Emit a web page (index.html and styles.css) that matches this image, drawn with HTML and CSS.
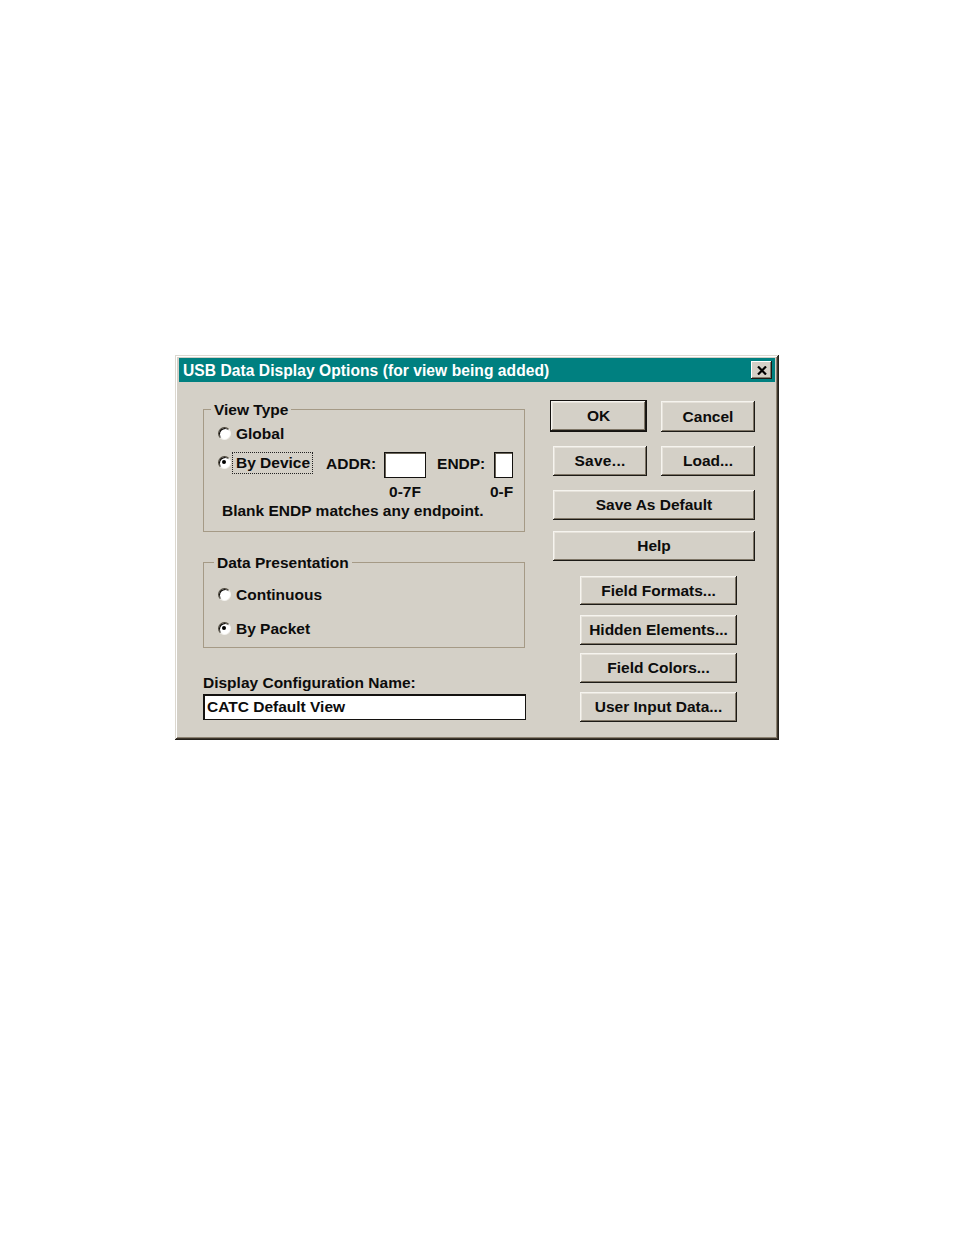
FILE: index.html
```html
<!DOCTYPE html>
<html>
<head>
<meta charset="utf-8">
<title>USB Data Display Options</title>
<link rel="stylesheet" href="styles.css">
</head>
<body>
<div class="page">
  <div class="dialog">
    <div class="titlebar">
      <span class="title">USB Data Display Options (for view being added)</span>
      <span class="close">
        <svg width="10" height="9" viewBox="0 0 10 9"><path d="M1 0.5 L9 8.5 M9 0.5 L1 8.5" stroke="#000" stroke-width="2.2"/></svg>
      </span>
    </div>
    <div class="content">
      <div class="left">
        <fieldset class="group g1">
          <legend>View Type</legend>
          <div class="inner">
            <div class="opt row1">
              <span class="radio"></span><span class="lbl">Global</span>
            </div>
            <div class="opt row2">
              <span class="radio on"></span><span class="lbl focus">By Device</span>
              <span class="fl addr">ADDR:</span><span class="box wide"></span>
              <span class="fl endp">ENDP:</span><span class="box narrow"></span>
            </div>
            <div class="ranges"><span class="r1">0-7F</span><span class="r2">0-F</span></div>
            <div class="note">Blank ENDP matches any endpoint.</div>
          </div>
        </fieldset>
        <fieldset class="group g2">
          <legend>Data Presentation</legend>
          <div class="inner">
            <div class="opt row3">
              <span class="radio"></span><span class="lbl">Continuous</span>
            </div>
            <div class="opt row4">
              <span class="radio on"></span><span class="lbl">By Packet</span>
            </div>
          </div>
        </fieldset>
        <div class="namelbl">Display Configuration Name:</div>
        <div class="namebox">CATC Default View</div>
      </div>
      <div class="right">
        <div class="brow">
          <span class="btn def ok">OK</span>
          <span class="btn cancel">Cancel</span>
        </div>
        <div class="brow r2row">
          <span class="btn save">Save...</span>
          <span class="btn load">Load...</span>
        </div>
        <span class="btn long sad">Save As Default</span>
        <span class="btn long help">Help</span>
        <span class="btn mid ff">Field Formats...</span>
        <span class="btn mid he">Hidden Elements...</span>
        <span class="btn mid fc">Field Colors...</span>
        <span class="btn mid ui">User Input Data...</span>
      </div>
    </div>
  </div>
</div>
</body>
</html>
```
FILE: styles.css
```css
html, body {
  margin: 0;
  padding: 0;
  background: #ffffff;
}
body {
  font-family: "Liberation Sans", Arial, sans-serif;
  font-weight: bold;
  font-size: 15.5px;
  line-height: 17px;
  color: #0c0c0c;
}
.page {
  padding: 355px 0 0 175px;
}
.dialog {
  width: 604px;
  height: 385px;
  box-sizing: border-box;
  background: #d4d0c7;
  padding: 3px 4px 4px 4px;
  box-shadow: inset -1px -1px 0 #24201a, inset 1px 1px 0 #dcd8d0,
              inset -2px -2px 0 #3e372d, inset 2px 2px 0 #ffffff,
              inset -3px -3px 0 #8c8272;
}
.titlebar {
  height: 24px;
  background: #008080;
  display: flex;
  align-items: center;
  justify-content: space-between;
  padding: 0 3px 0 4px;
}
.title {
  color: #ffffff;
  font-size: 15.6px;
  letter-spacing: 0.05px;
  line-height: 17px;
  padding-top: 1px;
}
.close {
  width: 21px;
  height: 18px;
  box-sizing: border-box;
  background: #d4d0c7;
  display: flex;
  align-items: center;
  justify-content: center;
  box-shadow: inset -1px -1px 0 #1c1a16, inset 1px 1px 0 #ffffff, inset -2px -2px 0 #857c6c;
}
.content {
  display: flex;
  padding: 18px 0 0 24px;
}
.left {
  width: 323px;
  display: flex;
  flex-direction: column;
}
.group {
  margin: 0;
  padding: 0;
  width: 322px;
  box-sizing: border-box;
  border: 1px solid #a59a86;
  min-width: 0;
}
.group legend {
  padding: 0 3px;
  margin-left: 7px;
  line-height: 17px;
}
.inner {
  padding-left: 14px;
}
.g1 {
  margin-top: 1px;
  padding: 7px 0 11px 0;
  height: 131px;
}
.g2 {
  margin-top: 22px;
  padding: 15px 0 10px 0;
}
.g2 legend {
  margin-left: 10px;
}
.opt {
  display: flex;
  align-items: center;
}
.row1 { height: 17px; }
.row2 { height: 26px; margin-top: 10px; }
.row3 { height: 17px; }
.row4 { height: 17px; margin-top: 17px; }
.radio {
  width: 13px;
  height: 13px;
  box-sizing: border-box;
  border-radius: 50%;
  background: #ffffff;
  border: 1px solid;
  border-color: #4a4438 #f4f2ee #f4f2ee #4a4438;
  box-shadow: inset 1px 1px 0 #0c0a08;
  position: relative;
  flex: none;
  margin-right: 5px;
}
.radio.on::after {
  content: "";
  position: absolute;
  left: 3px;
  top: 3px;
  width: 4px;
  height: 4px;
  border-radius: 50%;
  background: #000;
}
.row2 .radio { margin-right: 2px; margin-bottom: 5px; }
.row2 .focus, .row2 .fl { margin-bottom: 4px; }
.focus {
  outline: 1px dotted #222;
  padding: 1px 2px 2px 3px;
}
.fl.addr { margin-left: 14px; }
.fl.endp { margin-left: 11px; }
.box {
  height: 26px;
  box-sizing: border-box;
  background: #fff;
  border: 1px solid #141210;
  box-shadow: inset 1px 1px 0 #6a6458;
  margin-left: 8px;
}
.box.wide { width: 42px; }
.box.narrow { width: 19px; margin-left: 9px; }
.ranges {
  display: flex;
  margin-top: 5px;
  height: 17px;
}
.r1 {
  margin-left: 166px;
  width: 42px;
  text-align: center;
}
.r2 {
  margin-left: 64px;
}
.note {
  margin-top: 2px;
  padding-left: 4px;
  height: 17px;
}
.namelbl {
  margin-top: 26px;
  height: 17px;
}
.namebox {
  margin-top: 3px;
  width: 323px;
  height: 26px;
  box-sizing: border-box;
  background: #fff;
  border: 1px solid #141210;
  border-top-width: 2px;
  border-left-width: 2px;
  padding: 2px 0 0 2px;
}
.right {
  margin-left: 24px;
  display: flex;
  flex-direction: column;
  align-items: flex-start;
}
.brow {
  display: flex;
  align-items: flex-start;
}
.btn {
  display: flex;
  align-items: center;
  justify-content: center;
  box-sizing: border-box;
  height: 30px;
  background: #d4d0c7;
  box-shadow: inset -1px -1px 0 #1c1a16, inset 1px 1px 0 #f6f4ef,
              inset -2px -2px 0 #7e7566, inset 2px 2px 0 #e6e2da;
  padding-bottom: 1px;
}
.btn.def {
  border: 1px solid #141210;
}
.ok { width: 97px; height: 32px; }
.cancel { width: 94px; height: 31px; margin-left: 14px; margin-top: 1px; }
.r2row { margin-top: 14px; }
.save { width: 94px; margin-left: 3px; letter-spacing: 0.3px; }
.load { width: 94px; margin-left: 14px; }
.long { width: 202px; margin-left: 3px; }
.sad { margin-top: 14px; }
.help { margin-top: 11px; }
.mid { width: 157px; margin-left: 30px; }
.ff { margin-top: 15px; height: 29px; }
.he { margin-top: 10px; }
.fc { margin-top: 8px; }
.ui { margin-top: 9px; }
```
